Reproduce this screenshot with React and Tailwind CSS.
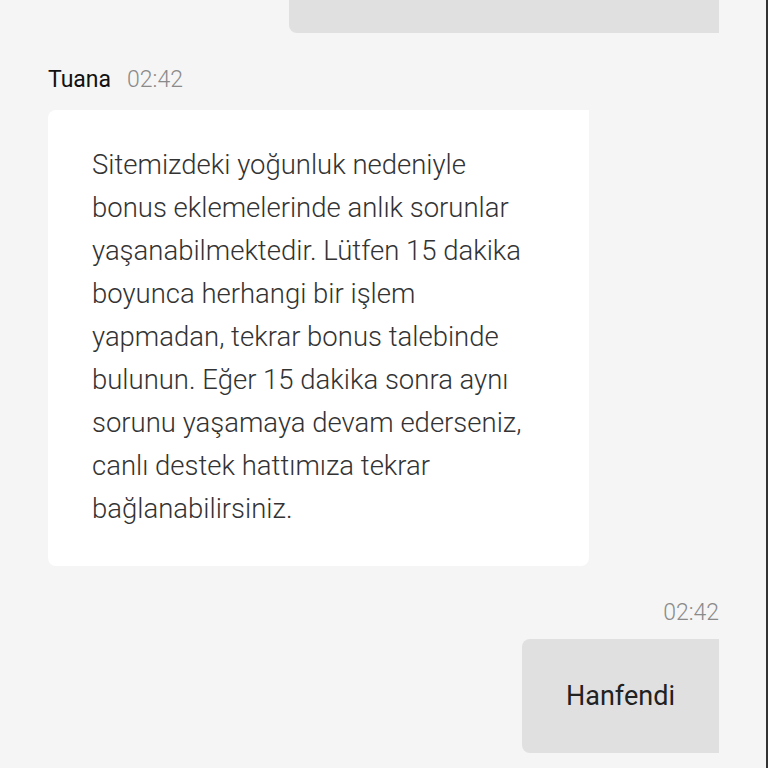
import React from "react";

const Stamp = ({ children, className = "" }) => (
  <span className={`text-[23px] leading-[26px] font-light text-[#8a8a8a] ${className}`}>{children}</span>
);

const lines = [
  "Sitemizdeki yoğunluk nedeniyle",
  "bonus eklemelerinde anlık sorunlar",
  "yaşanabilmektedir. Lütfen 15 dakika",
  "boyunca herhangi bir işlem",
  "yapmadan, tekrar bonus talebinde",
  "bulunun. Eğer 15 dakika sonra aynı",
  "sorunu yaşamaya devam ederseniz,",
  "canlı destek hattımıza tekrar",
  "bağlanabilirsiniz.",
];

const App = () => {
  return (
    <div
      className="h-[768px] overflow-hidden bg-[#f5f5f5] border-r-2 border-[#333] flex flex-col pl-[48px] pr-[47px]"
      style={{ fontFamily: "Roboto, 'Noto Sans', sans-serif" }}
    >
      <div className="self-end w-[430px] h-[33px] bg-[#e0e0e0] rounded-bl-lg" />

      <div className="mt-[34px] flex items-center gap-[16px]">
        <span className="text-[23px] leading-[26px] text-[#111]">Tuana</span>
        <Stamp>02:42</Stamp>
      </div>

      <div className="mt-[17px] w-[541px] bg-white rounded-lg rounded-tr-none pl-[44px] pr-[30px] pt-[33px] pb-[36px]">
        <p className="text-[27.5px] leading-[43px] font-light text-[#333]">
          {lines.map((l) => (
            <span key={l} className="block whitespace-nowrap">{l}</span>
          ))}
        </p>
      </div>

      <div className="mt-[34px] flex justify-end">
        <Stamp>02:42</Stamp>
      </div>

      <div className="mt-[13px] self-end w-[197px] h-[114px] bg-[#e0e0e0] rounded-l-lg flex items-center justify-center">
        <span className="text-[27px] leading-[43px] text-[#222]">Hanfendi</span>
      </div>
    </div>
  );
};

export default App;
